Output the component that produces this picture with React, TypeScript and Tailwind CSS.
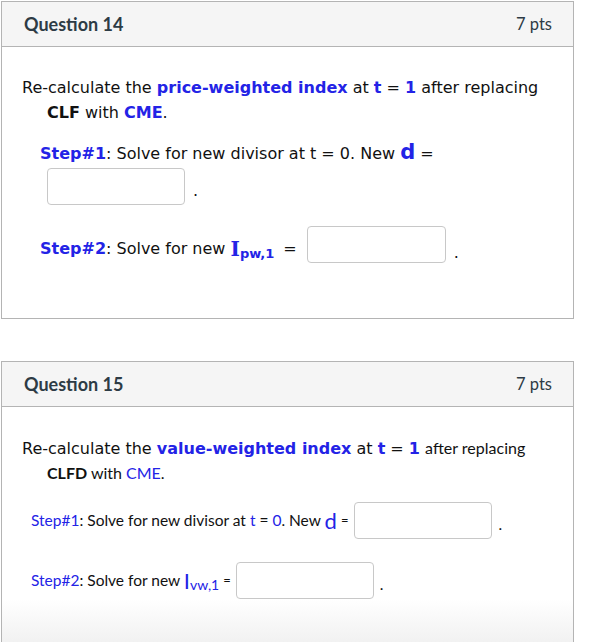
import React from 'react';

const VERDANA = "font-['DejaVu_Sans',Verdana,sans-serif]";
const LATO = "font-['Lato','Liberation_Sans',sans-serif]";
const BLUE = 'text-[#2323e6]';

function AnswerBox({ className = '' }: { className?: string }) {
    return <span className={`inline-block w-[138px] h-[37px] border border-[#c8c8c8] rounded-[4px] bg-white align-middle ${className}`} />;
}

function Header({ title }: { title: string }) {
    return (
        <div className={`h-[45px] bg-[#f5f5f5] border-b border-[#b4b4b4] flex items-center justify-between pl-[22px] pr-[21px] text-[#2d3b45] ${LATO}`}>
            <h2 className="text-[18px] font-bold">{title}</h2>
            <span className="text-[16.5px]">7 pts</span>
        </div>
    );
}

export default function App() {
    return (
        <div className="w-[590px] h-[642px] overflow-hidden bg-white pt-[1px] pl-[1px]">
            {/* Question 14 */}
            <div className="w-[573px] border border-[#b4b4b4]">
                <Header title="Question 14" />
                <div className={`h-[271px] pt-[28px] text-[16px] leading-[25px] text-[#111] ${VERDANA}`}>
                    <p className="pl-[45px] -indent-[25px]">
                        Re-calculate the <b className={BLUE}>price-weighted index</b> at <b className={BLUE}>t</b> = <b className={BLUE}>1</b> after replacing
                        {' '}<b>CLF</b> with <b className={BLUE}>CME</b>.
                    </p>
                    <div className="pl-[38px] mt-[15px]">
                        <div><b className={BLUE}>Step#1</b>: Solve for new divisor at t = 0. New <b className={`${BLUE} text-[21px]`}>d</b> =</div>
                        <div className="flex items-center gap-[8px] pl-[7px] mt-[2px]">
                            <AnswerBox />
                            <span className="pt-[8px]">.</span>
                        </div>
                    </div>
                    <div className="pl-[38px] mt-[27px] flex items-center">
                        <b className={BLUE}>Step#2</b>: Solve for new&nbsp;
                        <b className={`${BLUE} font-['DejaVu_Serif',serif] text-[20px] leading-none`}>I</b>
                        <b className={`${BLUE} text-[13px] leading-none pt-[10px]`}>pw,1</b>
                        <span className="ml-[9px] mr-[10px]">=</span>
                        <AnswerBox className="w-[139px] -mt-[8px]" />
                        <span className="ml-[8px] pt-[8px]">.</span>
                    </div>
                </div>
            </div>

            {/* Question 15 */}
            <div className="w-[573px] border border-[#b4b4b4] mt-[42px]">
                <Header title="Question 15" />
                <div className="h-[240px] pt-[29px] text-[#111] bg-gradient-to-b from-white from-[80%] to-[#f0f0f0]">
                    <p className={`pl-[45px] -indent-[25px] leading-[24px] text-[16px] ${VERDANA}`}>
                        Re-calculate the <b className={BLUE}>value-weighted index</b> at <b className={BLUE}>t</b> = <b className={BLUE}>1</b>{' '}
                        <span className={`${LATO} text-[16px]`}>after replacing<br /><b>CLFD</b> with <span className={BLUE}>CME</span>.</span>
                    </p>
                    <div className={`pl-[29px] mt-[16px] flex items-center text-[15.5px] ${LATO}`}>
                        <span className={BLUE}>Step#1</span>: Solve for new divisor at&nbsp;<span className={BLUE}>t</span>&nbsp;=&nbsp;<span className={BLUE}>0</span>. New&nbsp;
                        <span className={`${BLUE} text-[22px] leading-none`}>d</span>
                        <span className="ml-[4px] mr-[6px] text-[13px]">=</span>
                        <AnswerBox />
                        <span className="ml-[6px] pt-[8px]">.</span>
                    </div>
                    <div className={`pl-[29px] mt-[23px] flex items-center text-[15.5px] ${LATO}`}>
                        <span className={BLUE}>Step#2</span>: Solve for new&nbsp;
                        <span className={`${BLUE} text-[22px] leading-none`}>I</span>
                        <span className={`${BLUE} text-[14px] leading-none pt-[9px]`}>vw,1</span>
                        <span className="ml-[4px] mr-[5px] text-[13px]">=</span>
                        <AnswerBox />
                        <span className="ml-[6px] pt-[8px]">.</span>
                    </div>
                </div>
            </div>
        </div>
    );
}
